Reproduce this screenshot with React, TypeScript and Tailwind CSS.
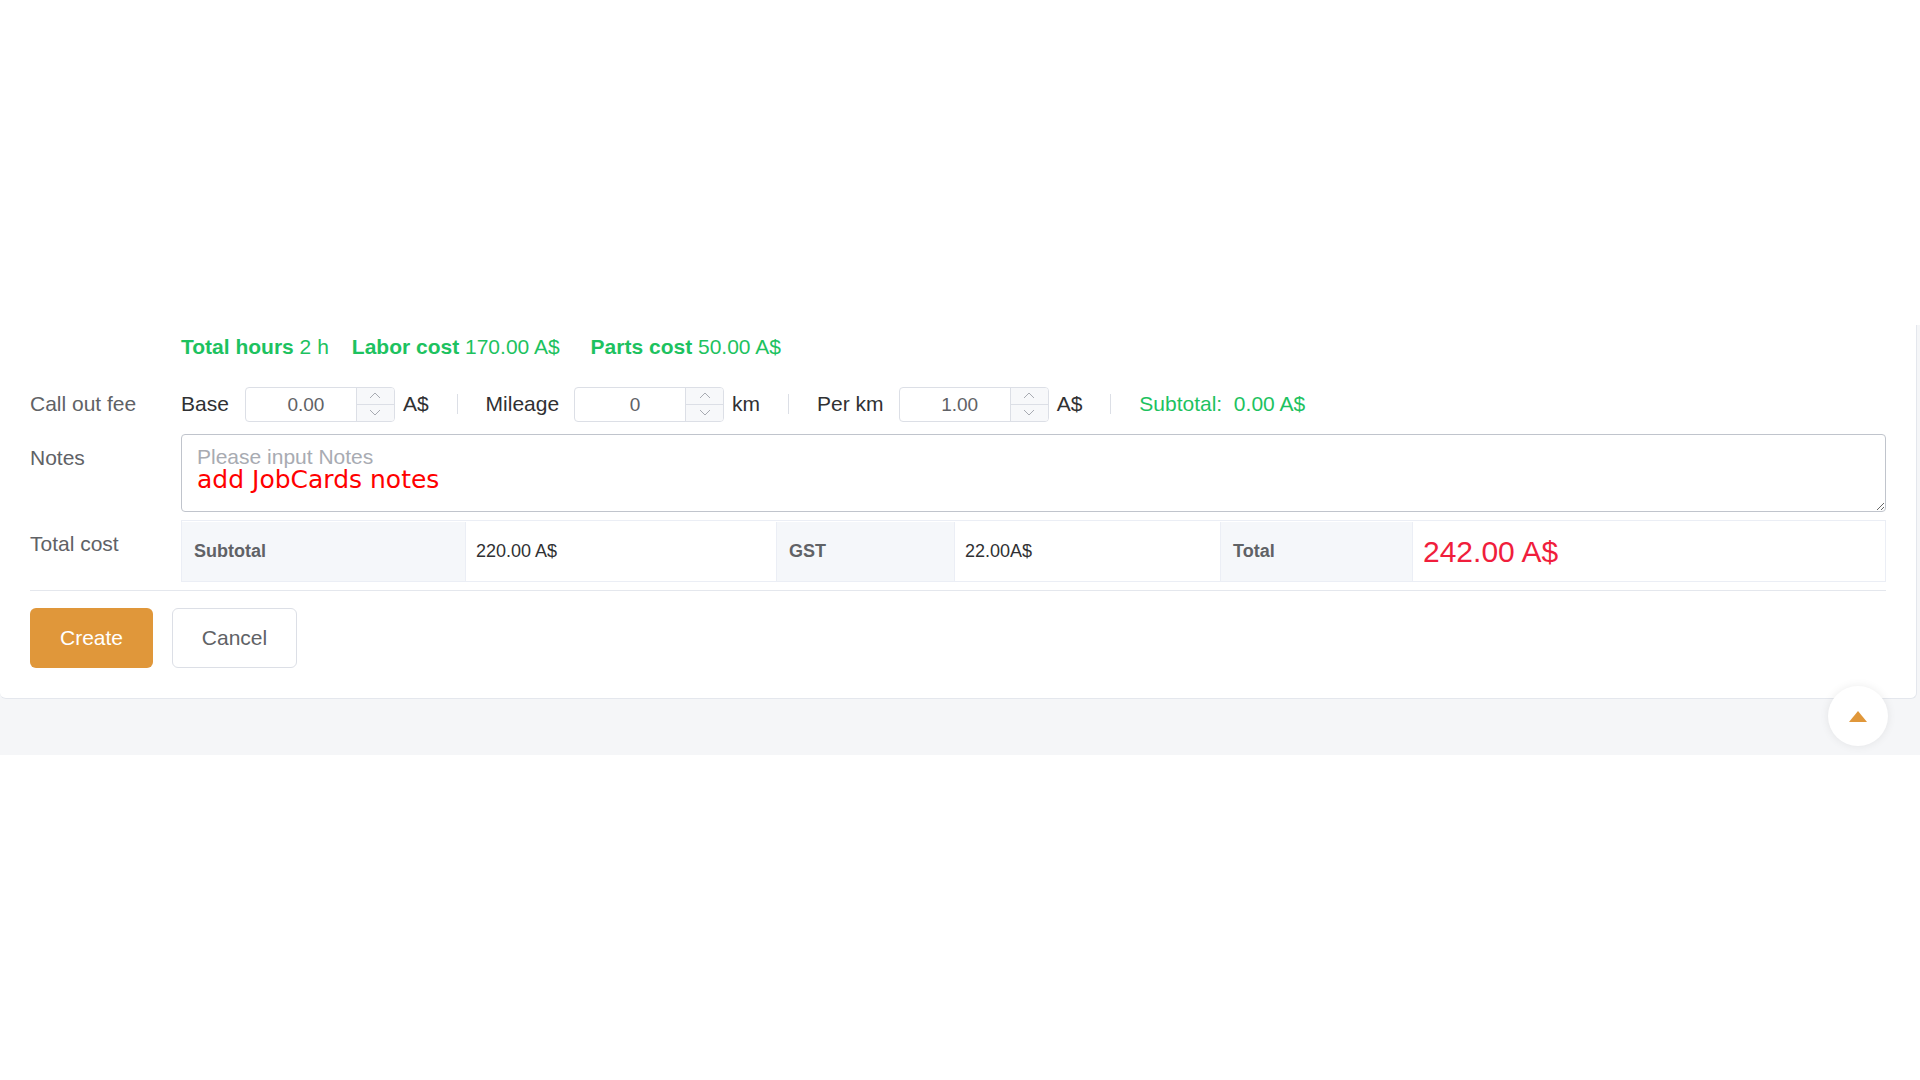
import React from "react";

function Chevron({ up }: { up?: boolean }) {
  return (
    <svg width="12" height="7" viewBox="0 0 12 7" fill="none">
      <polyline
        points={up ? "1,6 6,1 11,6" : "1,1 6,6 11,1"}
        stroke="#a8abb2"
        strokeWidth="1"
        fill="none"
      />
    </svg>
  );
}

function NumberInput({ value }: { value: string }) {
  return (
    <div className="flex h-[35px] w-[150px] overflow-hidden rounded-[4px] border border-[#dcdfe6] bg-white">
      <div className="flex flex-1 items-center justify-center pl-[10px] pt-[2px] text-[19px] text-[#606266]">
        {value}
      </div>
      <div className="flex w-[38px] flex-col border-l border-[#dcdfe6] bg-[#f7f8fa]">
        <div className="flex flex-1 items-center justify-center border-b border-[#dcdfe6]">
          <Chevron up />
        </div>
        <div className="flex flex-1 items-center justify-center">
          <Chevron />
        </div>
      </div>
    </div>
  );
}

function Sep() {
  return <div className="mx-[28px] h-[20px] w-px bg-[#dcdfe6]" />;
}

export default function App() {
  return (
    <div className="relative min-h-[1080px] w-[1920px] bg-white font-['Liberation_Sans',Arial,sans-serif]">
      <div className="h-[325px]" />
      <div className="bg-[#f5f6f8] pb-[56px] pr-[3px]">
        <div className="rounded-b-[6px] border-b border-r border-[#e4e7ed] bg-white pb-[30px] pl-[30px] pr-[30px] pt-[10px]">
          {/* summary */}
          <div className="ml-[151px] flex h-[24px] items-center text-[21px] leading-[24px] text-[#1dc25f]">
            <span className="mr-[23px] whitespace-pre">
              <span className="font-bold">Total hours</span> 2 h
            </span>
            <span className="mr-[31px] whitespace-pre">
              <span className="font-bold">Labor cost</span> 170.00 A$
            </span>
            <span className="whitespace-pre">
              <span className="font-bold">Parts cost</span> 50.00 A$
            </span>
          </div>

          {/* call out fee */}
          <div className="mt-[21px] flex h-[48px] items-center text-[21px]">
            <div className="w-[151px] text-[#606266]">Call out fee</div>
            <div className="flex items-center text-[#303133]">
              <span className="mr-[16px]">Base</span>
              <NumberInput value="0.00" />
              <span className="ml-[8px]">A$</span>
              <Sep />
              <span className="mr-[15px]">Mileage</span>
              <NumberInput value="0" />
              <span className="ml-[8px]">km</span>
              <Sep />
              <span className="mr-[15px]">Per km</span>
              <NumberInput value="1.00" />
              <span className="ml-[8px]">A$</span>
              <Sep />
              <span className="whitespace-pre text-[#1dc25f]">Subtotal:  0.00 A$</span>
            </div>
          </div>

          {/* notes */}
          <div className="mt-[6px] flex">
            <div className="h-[48px] w-[151px] text-[21px] leading-[48px] text-[#606266]">Notes</div>
            <div className="relative h-[78px] flex-1">
              <textarea
                className="block h-[78px] w-full resize-y rounded-[4px] border border-[#c0c4cc] bg-white px-[15px] pt-[10px] text-[21px] leading-[24px] text-[#606266] outline-none placeholder:text-[#a8abb2]"
                placeholder="Please input Notes"
              />
              <span className="pointer-events-none absolute left-[16px] top-[32px] font-['DejaVu_Sans',sans-serif] text-[25px] leading-[28px] text-[#ff0000]">
                add JobCards notes
              </span>
            </div>
          </div>

          {/* total cost */}
          <div className="mt-[8px] flex">
            <div className="h-[48px] w-[151px] text-[21px] leading-[48px] text-[#606266]">Total cost</div>
            <div className="grid h-[62px] flex-1 grid-cols-[284px_311px_178px_266px_192px_1fr] border border-[#ebeef5] pt-[1px] text-[18px]">
              <div className="flex items-center border-r border-[#ebeef5] bg-[#f5f7fa] pl-[12px] font-bold text-[#606266]">
                Subtotal
              </div>
              <div className="flex items-center border-r border-[#ebeef5] pl-[10px] text-[#303133]">220.00 A$</div>
              <div className="flex items-center border-r border-[#ebeef5] bg-[#f5f7fa] pl-[12px] font-bold text-[#606266]">
                GST
              </div>
              <div className="flex items-center border-r border-[#ebeef5] pl-[10px] text-[#303133]">22.00A$</div>
              <div className="flex items-center border-r border-[#ebeef5] bg-[#f5f7fa] pl-[12px] font-bold text-[#606266]">
                Total
              </div>
              <div className="flex items-center pl-[10px] text-[30px] text-[#f01e3c]">242.00 A$</div>
            </div>
          </div>

          <div className="mt-[8px] h-px bg-[#e4e7ed]" />

          <div className="mt-[17px] flex gap-[19px] text-[21px]">
            <button className="h-[60px] w-[123px] rounded-[6px] bg-[#e0973a] text-white">Create</button>
            <button className="h-[60px] w-[125px] rounded-[6px] border border-[#dcdfe6] bg-white text-[#606266]">
              Cancel
            </button>
          </div>
        </div>
      </div>

      {/* back to top */}
      <div className="absolute left-[1828px] top-[686px] flex h-[60px] w-[60px] items-center justify-center rounded-full bg-white shadow-[0_0_10px_rgba(0,0,0,0.08)]">
        <svg width="18" height="11" viewBox="0 0 18 11">
          <polygon points="9,0 18,11 0,11" fill="#e0973a" />
        </svg>
      </div>
    </div>
  );
}
